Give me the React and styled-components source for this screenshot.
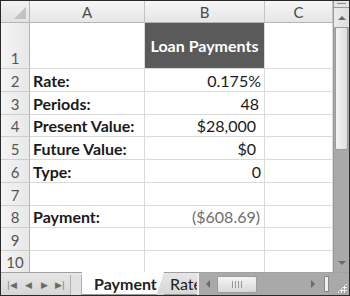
import React from 'react';
import styled, { createGlobalStyle } from 'styled-components';

const GlobalStyle = createGlobalStyle`
    html, body {
        margin: 0;
        padding: 0;
        background: #fff;
    }
    body {
        font-family: Lato, "Liberation Sans", sans-serif;
    }
`

const Frame = styled.div`
    width: 350px;
    height: 296px;
    box-sizing: border-box;
    border: 1px solid #2a2a2a;
    display: flex;
    flex-direction: column;
    overflow: hidden;
    background: #fff;
`

const Body = styled.div`
    display: flex;
    flex: 1;
    min-height: 0;
`

const Sheet = styled.div`
    display: grid;
    grid-template-columns: 29px 115px 120px 68px;
    grid-template-rows: 22px 46px 23px 23px 22px 23px 23px 23px 22px 23px 22px;
    width: 332px;
    overflow: hidden;
`

const Corner = styled.div`
    background: linear-gradient(#f2f2f2, #e2e2e2);
    border-right: 1px solid #b5b5b5;
    border-bottom: 1px solid #b5b5b5;
    position: relative;
    &::after {
        content: '';
        position: absolute;
        right: 3px;
        bottom: 3px;
        border-style: solid;
        border-width: 0 0 12px 12px;
        border-color: transparent transparent #c2c2c2 transparent;
    }
`

const ColHead = styled.div`
    background: linear-gradient(#f6f6f6, #e6e6e6);
    border-right: 1px solid #c4c4c4;
    border-bottom: 1px solid #b5b5b5;
    color: #4a4a4a;
    font-size: 15px;
    display: flex;
    align-items: center;
    justify-content: center;
`

const RowHead = styled.div`
    background: linear-gradient(90deg, #f4f4f4, #e8e8e8);
    border-right: 1px solid #b5b5b5;
    border-bottom: 1px solid #cfcfcf;
    color: #555;
    font-size: 15px;
    display: flex;
    align-items: flex-end;
    justify-content: center;
    padding-bottom: 1px;
    box-sizing: border-box;
`

const Cell = styled.div`
    border-right: 1px solid #dadada;
    border-bottom: 1px solid #dadada;
    font-size: 16px;
    display: flex;
    align-items: flex-end;
    justify-content: ${p => (p.$right ? 'flex-end' : 'flex-start')};
    padding: 0 ${p => p.$pad || 3}px 1px 3px;
    box-sizing: border-box;
    font-weight: ${p => (p.$bold ? 700 : 400)};
    color: ${p => p.$muted ? '#6e6e6e' : '#1a1a1a'};
    white-space: nowrap;
`

const TitleCell = styled.div`
    background: #5a5a5a;
    color: #fff;
    font-weight: 700;
    font-size: 16px;
    display: flex;
    align-items: center;
    justify-content: center;
    border-right: 1px solid #dadada;
    border-bottom: 1px solid #dadada;
    box-sizing: border-box;
`

const VScroll = styled.div`
    width: 16px;
    display: flex;
    flex-direction: column;
    background: #a9a9a9;
    border-left: 1px solid #9a9a9a;
    box-sizing: border-box;
`

const SplitBox = styled.div`
    height: 6px;
    background: #e4e4e4;
    border-bottom: 1px solid #9a9a9a;
    &::after {
        content: '';
        display: block;
        margin: 2px 3px 0;
        height: 1px;
        background: #8a8a8a;
    }
`

const ArrowBtn = styled.div`
    height: 19px;
    display: flex;
    align-items: center;
    justify-content: center;
    background: ${p => (p.$light ? 'linear-gradient(90deg, #ececec, #dcdcdc)' : 'transparent')};
`

const Tri = styled.div`
    width: 0;
    height: 0;
    border-left: 4px solid transparent;
    border-right: 4px solid transparent;
    ${p => p.$up
        ? 'border-bottom: 4px solid #6a6a6a;'
        : 'border-top: 4px solid #6a6a6a;'}
`

const Thumb = styled.div`
    height: 123px;
    margin: 0 1px;
    border: 1px solid #9c9c9c;
    border-radius: 2px;
    background: linear-gradient(90deg, #f4f4f4, #dedede);
    box-sizing: border-box;
`

const Track = styled.div`
    flex: 1;
`

const TabBar = styled.div`
    height: 22px;
    display: flex;
    align-items: stretch;
    background: linear-gradient(#e6e6e6, #d6d6d6);
    border-top: 1px solid #a0a0a0;
`

const NavGroup = styled.div`
    display: flex;
    align-items: center;
    padding-left: 3px;
    width: 66px;
    color: #6a6a6a;
    font-size: 9px;
`

const NavBtn = styled.span`
    width: 16px;
    text-align: center;
`

const TabSep = styled.div`
    width: 10px;
    border-left: 1px solid #b0b0b0;
    border-right: 1px solid #b0b0b0;
    margin: 2px 0 0;
    background: #e2e2e2;
`

const Tab = styled.div`
    display: flex;
    align-items: center;
    flex-shrink: 0;
    padding: 0 ${p => p.$pr}px 0 ${p => p.$pl}px;
    width: ${p => p.$w}px;
    box-sizing: border-box;
    font-size: 16px;
    font-weight: ${p => (p.$active ? 700 : 400)};
    color: #222;
    background: ${p => (p.$active ? '#fff' : 'transparent')};
    margin-top: -1px;
    clip-path: ${p => p.$active ? 'polygon(0 0, 100% 0, 91% 100%, 0 100%)' : 'none'};
    border-bottom: 1px solid #9a9a9a;
    white-space: nowrap;
    overflow: hidden;
`

const HScroll = styled.div`
    flex: 1;
    display: flex;
    align-items: center;
    background: #a9a9a9;
    border-left: 2px solid #efefef;
    height: 100%;
`

const HArrow = styled.div`
    width: 18px;
    display: flex;
    justify-content: center;
    & > div {
        width: 0;
        height: 0;
        border-top: 4px solid transparent;
        border-bottom: 4px solid transparent;
        ${p => p.$left ? 'border-right: 4px solid #6a6a6a;' : 'border-left: 4px solid #6a6a6a;'}
    }
`

const HThumb = styled.div`
    width: 40px;
    height: 17px;
    border: 1px solid #9c9c9c;
    border-radius: 2px;
    background: linear-gradient(#f4f4f4, #d8d8d8);
    box-sizing: border-box;
    display: flex;
    align-items: center;
    justify-content: center;
    gap: 2px;
    & > span {
        width: 1px;
        height: 7px;
        background: #999;
    }
`

const HTrack = styled.div`
    flex: 1;
`

const HSplit = styled.div`
    width: 3px;
    height: 14px;
    background: #f0f0f0;
    border: 1px solid #888;
    margin: 0 4px 0 2px;
`

const Grip = styled.div`
    width: 16px;
    height: 100%;
    background: #a9a9a9;
    position: relative;
    &::after {
        content: '';
        position: absolute;
        right: 2px;
        bottom: 2px;
        width: 10px;
        height: 10px;
        background:
            radial-gradient(circle, #f4f4f4 1px, transparent 1.2px) 0 0 / 3px 3px;
        clip-path: polygon(100% 0, 100% 100%, 0 100%);
    }
`

const rows = [
    { n: 2, label: 'Rate:', value: '0.175%', pad: 3 },
    { n: 3, label: 'Periods:', value: '48', pad: 5 },
    { n: 4, label: 'Present Value:', value: '$28,000', pad: 8 },
    { n: 5, label: 'Future Value:', value: '$0', pad: 8 },
    { n: 6, label: 'Type:', value: '0', pad: 3 },
    { n: 7, label: '', value: '' },
    { n: 8, label: 'Payment:', value: '($608.69)', pad: 4, muted: true },
    { n: 9, label: '', value: '' },
    { n: 10, label: '', value: '' },
]

const App = () => {
    return (
        <Frame>
            <GlobalStyle />
            <Body>
                <Sheet>
                    <Corner />
                    <ColHead>A</ColHead>
                    <ColHead>B</ColHead>
                    <ColHead>C</ColHead>

                    <RowHead>1</RowHead>
                    <Cell />
                    <TitleCell>Loan Payments</TitleCell>
                    <Cell />

                    {rows.map(r => (
                        <React.Fragment key={r.n}>
                            <RowHead>{r.n}</RowHead>
                            <Cell $bold>{r.label}</Cell>
                            <Cell $right $pad={r.pad} $muted={r.muted}>{r.value}</Cell>
                            <Cell />
                        </React.Fragment>
                    ))}
                </Sheet>
                <VScroll>
                    <SplitBox />
                    <ArrowBtn $light><Tri $up /></ArrowBtn>
                    <Thumb />
                    <Track />
                    <ArrowBtn><Tri /></ArrowBtn>
                </VScroll>
            </Body>
            <TabBar>
                <NavGroup>
                    <NavBtn>|◀</NavBtn>
                    <NavBtn>◀</NavBtn>
                    <NavBtn>▶</NavBtn>
                    <NavBtn>▶|</NavBtn>
                </NavGroup>
                <TabSep />
                <Tab $active $w={82} $pl={12} $pr={0}>Payment</Tab>
                <Tab $w={33} $pl={6} $pr={0}>Rate</Tab>
                <HScroll>
                    <HArrow $left><div /></HArrow>
                    <HThumb><span /><span /><span /><span /></HThumb>
                    <HTrack />
                    <HArrow><div /></HArrow>
                    <HSplit />
                </HScroll>
                <Grip />
            </TabBar>
        </Frame>
    )
}

export default App;
